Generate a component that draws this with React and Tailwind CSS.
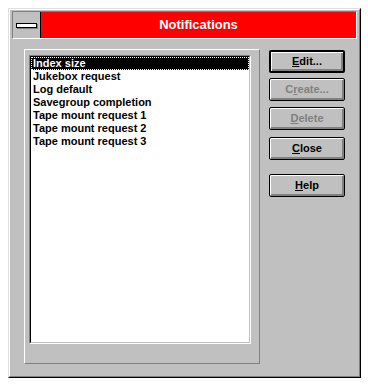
const ITEMS = [
  'Index size',
  'Jukebox request',
  'Log default',
  'Savegroup completion',
  'Tape mount request 1',
  'Tape mount request 2',
  'Tape mount request 3',
]

function Btn({ children, isDefault, disabled, className = '' }) {
  return (
    <button
      className={`flex h-[23px] w-[76px] items-center justify-center rounded-[2px] bg-[#c0c0c0] text-[11px] font-bold leading-none shadow-[inset_1px_1px_0_#fff,inset_-2px_-2px_0_#808080] ${
        isDefault ? 'border-2 border-black' : 'border border-black'
      } ${disabled ? 'text-[#808080]' : 'text-black'} ${className}`}
    >
      {children}
    </button>
  )
}

export default function App() {
  const selected = 0

  return (
    <div
      className="h-[386px] w-[368px] bg-white pl-[8px] pt-[8px]"
      style={{ fontFamily: '"Liberation Sans", Arial, sans-serif' }}
    >
      <div className="h-[370px] w-[353px] border border-b-black border-l-[#dfdfdf] border-r-black border-t-[#dfdfdf]">
        <div className="flex h-full flex-col border border-b-[#808080] border-l-white border-r-[#808080] border-t-white bg-[#c0c0c0]">
          {/* title bar */}
          <div className="mx-[2px] mt-[1px] flex h-[28px] border border-b-white border-l-[#808080] border-r-white border-t-[#808080]">
            <div className="flex w-[28px] items-center justify-center border-r border-black bg-[#c0c0c0]">
              <div className="h-[5px] w-[21px] border border-black bg-white shadow-[1px_1px_0_#808080]" />
            </div>
            <div className="flex flex-1 items-center justify-center bg-[#ff0000] text-[13px] font-bold text-white">
              Notifications
            </div>
          </div>

          <div className="flex items-start">
            {/* list group */}
            <div className="ml-[14px] mt-[10px] h-[315px] w-[236px] border border-b-[#808080] border-l-white border-r-[#808080] border-t-white">
              <div className="ml-[4px] mt-[5px] h-[289px] w-[222px] border border-b-white border-l-[#808080] border-r-white border-t-[#808080]">
                <div className="h-full w-full border border-b-[#c0c0c0] border-l-black border-r-[#c0c0c0] border-t-black bg-white">
                  {ITEMS.map((item, i) => (
                    <div
                      key={item}
                      className={`h-[13px] px-[2px] text-[11px] font-bold leading-[13px] ${
                        i === selected
                          ? 'bg-black text-white outline-1 -outline-offset-1 outline-dotted outline-white'
                          : 'text-black'
                      }`}
                    >
                      {item}
                    </div>
                  ))}
                </div>
              </div>
            </div>

            {/* buttons */}
            <div className="ml-[9px] mt-[11px] flex flex-col">
              <Btn isDefault>
                <span>
                  <u>E</u>dit...
                </span>
              </Btn>
              <Btn disabled className="mt-[5px]">
                <span>
                  C<u>r</u>eate...
                </span>
              </Btn>
              <Btn disabled className="mt-[6px]">
                <span>
                  <u>D</u>elete
                </span>
              </Btn>
              <Btn className="mt-[7px]">
                <span>
                  <u>C</u>lose
                </span>
              </Btn>
              <Btn className="mt-[14px]">
                <span>
                  <u>H</u>elp
                </span>
              </Btn>
            </div>
          </div>
        </div>
      </div>
    </div>
  )
}
